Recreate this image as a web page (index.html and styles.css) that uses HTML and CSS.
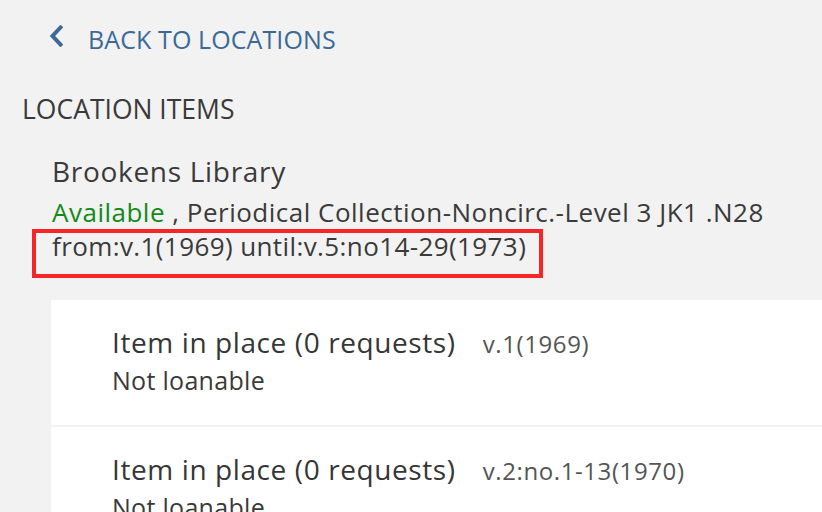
FILE: index.html
```html
<!DOCTYPE html>
<html lang="en">
<head>
<meta charset="utf-8">
<title>Location items</title>
<link rel="stylesheet" href="styles.css">
</head>
<body>
<div class="page">
  <a class="back" href="#">
    <svg class="chev" width="14" height="22" viewBox="0 0 14 22"><path d="M11.5 2.5 L3.5 11 L11.5 19.5" fill="none" stroke="#3c6a96" stroke-width="4" stroke-linecap="square"/></svg>
    <span>BACK TO LOCATIONS</span>
  </a>
  <h2 class="heading">LOCATION ITEMS</h2>
  <div class="location">
    <div class="lib">Brookens Library</div>
    <div class="status"><span class="avail">Available</span> , Periodical Collection-Noncirc.-Level 3 JK1 .N28</div>
    <div class="range"><span>from:v.1(1969) until:v.5:no14-29(1973)</span></div>
  </div>
  <div class="card">
    <div class="item">
      <div class="item-top"><span class="item-title">Item in place (0 requests)</span><span class="vol">v.1(1969)</span></div>
      <div class="policy">Not loanable</div>
    </div>
    <div class="item">
      <div class="item-top"><span class="item-title">Item in place (0 requests)</span><span class="vol">v.2:no.1-13(1970)</span></div>
      <div class="policy">Not loanable</div>
    </div>
  </div>
</div>
</body>
</html>
```
FILE: styles.css
```css
html, body {
  margin: 0;
  padding: 0;
  background: #f2f2f2;
  font-family: "Open Sans", sans-serif;
  color: #3a3a3a;
  overflow: hidden;
}
.page {
  width: 822px;
  height: 512px;
  overflow: hidden;
}
.back {
  display: flex;
  align-items: center;
  gap: 25px;
  padding: 24px 0 0 49px;
  height: 30px;
  line-height: 30px;
  color: #3c6a96;
  text-decoration: none;
  font-size: 25px;
  letter-spacing: 0.1px;
}
.chev {
  display: block;
  margin-bottom: 6px;
}
.heading {
  margin: 38px 0 0;
  padding-left: 22px;
  height: 34px;
  line-height: 34px;
  font-size: 26.5px;
  font-weight: 400;
  color: #3a3a3a;
}
.location {
  padding: 28px 0 0 32px;
}
.lib {
  padding-left: 20px;
  font-size: 28px;
  line-height: 34px;
  letter-spacing: 0.7px;
}
.status {
  padding-left: 20px;
  margin-top: 7px;
  font-size: 26px;
  line-height: 34px;
  letter-spacing: 0.5px;
}
.avail { color: #128a18; }
.range {
  width: 487px;
  border: 4px solid #f72525;
  padding: 0 0 15px 16px;
  font-size: 26px;
  line-height: 26px;
  letter-spacing: 0.4px;
  white-space: nowrap;
}
.card {
  margin: 22px 0 0 51px;
  background: #fff;
}
.item {
  padding: 25px 0 30px 61px;
  border-bottom: 2px solid #f2f2f2;
}
.item-top {
  display: flex;
  align-items: baseline;
  gap: 27px;
  height: 34px;
}
.item-title {
  font-size: 28px;
  line-height: 34px;
  letter-spacing: 0.6px;
  color: #363636;
}
.vol {
  font-size: 24px;
  letter-spacing: 0.6px;
  color: #555;
}
.policy {
  margin-top: 6px;
  font-size: 25px;
  line-height: 30px;
  letter-spacing: 0.3px;
}
```
